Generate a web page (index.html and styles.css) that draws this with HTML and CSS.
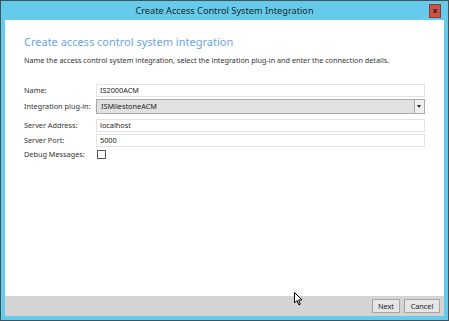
FILE: index.html
```html
<!doctype html>
<html lang="en">
	<head>
		<meta charset="UTF-8" />
		<title>Create Access Control System Integration</title>
		<link rel="stylesheet" href="styles.css">
	</head>
	<body>
		<div class="window">
			<div class="titlebar">
				<span class="title">Create Access Control System Integration</span>
				<span class="close">x</span>
			</div>
			<div class="content">
				<h1>Create access control system integration</h1>
				<p class="intro">Name the access control system integration, select the integration plug-in and enter the connection details.</p>

				<div class="form">
					<label>Name:</label>
					<div class="field">IS2000ACM</div>

					<label>Integration plug-in:</label>
					<div class="select">
						<span class="select-value">ISMilestoneACM</span>
						<span class="select-arrow"></span>
					</div>

					<label class="row-addr">Server Address:</label>
					<div class="field row-addr">localhost</div>

					<label>Server Port:</label>
					<div class="field">5000</div>

					<label>Debug Messages:</label>
					<div><span class="checkbox"></span></div>
				</div>
			</div>
			<div class="footer">
				<button class="btn btn-next">Next</button>
				<button class="btn btn-cancel">Cancel</button>
			</div>
			<svg class="cursor" width="9" height="14" viewBox="0 0 9 14">
				<path d="M0.5 0.5 L0.5 11 L3 8.5 L4.8 12.8 L6.3 12.2 L4.6 8 L8 8 Z" fill="#fff" stroke="#000" stroke-width="1"/>
			</svg>
		</div>
	</body>
</html>
```

FILE: styles.css
```css
html, body {
	margin: 0;
	padding: 0;
}
body {
	font-family: "Noto Sans", "Open Sans", sans-serif;
	color: #333;
	width: 449px;
	height: 321px;
	overflow: hidden;
}
.window {
	position: relative;
	box-sizing: border-box;
	width: 449px;
	height: 321px;
	border: 1px solid #41525c;
	background: #66cbea;
	padding: 0 4px 4px 4px;
	display: flex;
	flex-direction: column;
}
.titlebar {
	height: 19px;
	display: flex;
	align-items: center;
	justify-content: center;
	position: relative;
}
.title {
	font-size: 9.2px;
	color: #1a2630;
}
.close {
	position: absolute;
	right: 3px;
	top: 3px;
	width: 10px;
	height: 12px;
	background: #c8534a;
	border: 1px solid #8e3a33;
	color: #3a1410;
	font-size: 7px;
	font-weight: bold;
	line-height: 11px;
	text-align: center;
}
.content {
	flex: 1;
	background: #fff;
	padding: 14px 19px 0 19px;
}
h1 {
	margin: 0;
	font-size: 11px;
	font-weight: normal;
	line-height: 16px;
	color: #6ea6dc;
}
.intro {
	margin: 5px 0 0 0;
	font-size: 7.25px;
	line-height: 10px;
	color: #333;
}
.form {
	margin-top: 19px;
	display: grid;
	grid-template-columns: 72px 1fr;
	grid-template-rows: 13px 15px 16px 13px 10px;
	row-gap: 2px;
	align-items: center;
	font-size: 7.3px;
}
.form label {
	color: #333;
	line-height: 13px;
}
.form .row-addr {
	align-self: end;
}
.field {
	box-sizing: border-box;
	height: 13px;
	border: 1px solid #e3e3e3;
	padding: 0 3px;
	line-height: 11px;
	color: #222;
}
.select {
	box-sizing: border-box;
	height: 15px;
	border: 1px solid #a9a9a9;
	background: #e1e1e1;
	display: flex;
	align-items: stretch;
	color: #222;
}
.select-value {
	flex: 1;
	padding: 0 4px;
	line-height: 13px;
}
.select-arrow {
	width: 9px;
	border-left: 1px solid #a9a9a9;
	background: #f0f0f0;
	position: relative;
}
.select-arrow::after {
	content: "";
	position: absolute;
	left: 2px;
	top: 5px;
	border-left: 2.5px solid transparent;
	border-right: 2.5px solid transparent;
	border-top: 3px solid #222;
}
.checkbox {
	display: block;
	margin-left: 1px;
	width: 7px;
	height: 7px;
	border: 1px solid #555;
}
.footer {
	height: 20px;
	background: #d4d4d4;
	display: flex;
	justify-content: flex-end;
	align-items: center;
	gap: 4px;
	padding-right: 4px;
}
.btn {
	box-sizing: border-box;
	height: 14px;
	padding: 0;
	border: 1px solid #a5a5a5;
	background: #e6e6e6;
	font-family: "Noto Sans", "Open Sans", sans-serif;
	font-size: 7.3px;
	color: #222;
	line-height: 12px;
}
.btn-next {
	width: 28px;
}
.btn-cancel {
	width: 36px;
}
.cursor {
	position: absolute;
	left: 293px;
	top: 291px;
}
```
